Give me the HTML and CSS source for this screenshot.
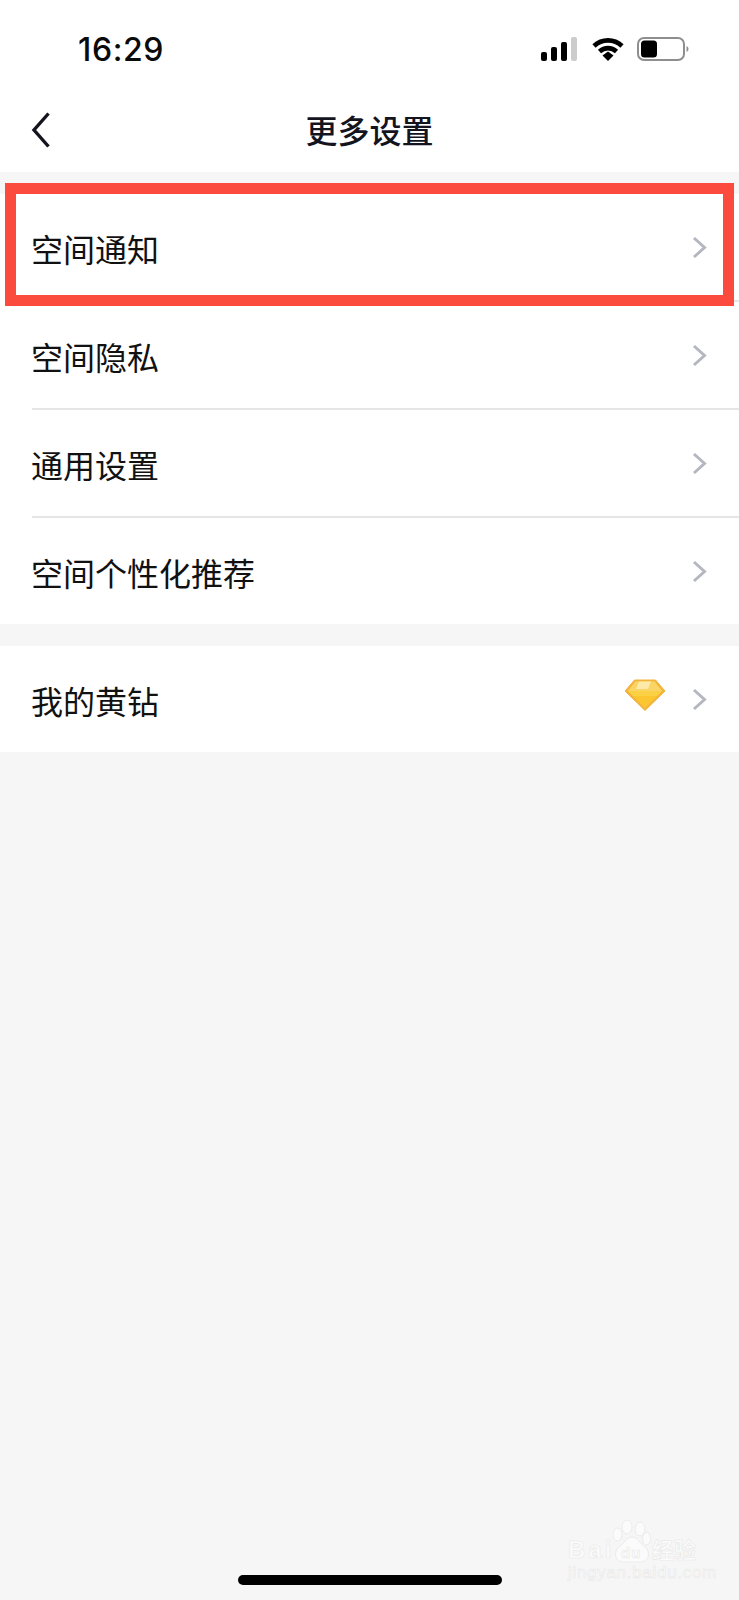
FILE: index.html
```html
<!DOCTYPE html>
<html lang="zh-CN">
<head>
<meta charset="utf-8">
<title>更多设置</title>
<link rel="stylesheet" href="styles.css">
</head>
<body>
<div class="screen">
  <header class="top">
    <div class="status">
      <span class="time">16:29</span>
      <div class="status-icons">
        <svg class="signal" width="36" height="24" viewBox="0 0 36 24"><rect x="0" y="15" width="6" height="9" rx="2" fill="#000"/><rect x="10" y="10" width="6" height="14" rx="2" fill="#000"/><rect x="20" y="5" width="6" height="19" rx="2" fill="#000"/><rect x="30" y="0" width="6" height="24" rx="2" fill="#ccc"/></svg>
        <svg class="wifi" width="32" height="24" viewBox="0 0 32 24"><path d="M2 9C10 1.500 22 1.500 30 9M7.500 14.500C12.500 10 19.500 10 24.500 14.500" fill="none" stroke="#000" stroke-width="4.600"/><path d="M10.500 18.500L16 14.500L21.500 18.500L16 24Z" fill="#000"/></svg>
        <svg class="battery" width="52" height="24" viewBox="0 0 52 24"><rect x="1" y="1" width="46" height="22" rx="6" fill="none" stroke="#8e8e8e" stroke-width="2"/><rect x="4" y="3.500" width="16" height="17" rx="3.500" fill="#000"/><path d="M49.500 9C51 9.800 51.500 10.800 51.500 12S51 14.200 49.500 15Z" fill="#8e8e8e"/></svg>
      </div>
    </div>
    <nav class="nav">
      <svg class="back" width="20" height="36" viewBox="0 0 20 36"><path d="M17.500 1.500L3 18L17.500 34.500" fill="none" stroke="#14141e" stroke-width="3.400"/></svg>
      <h1 class="title">更多设置</h1>
    </nav>
  </header>

  <section class="group">
    <div class="row"><span class="label">空间通知</span><svg class="chev" width="15" height="23" viewBox="0 0 15 23"><path d="M2 2L12.500 11.500L2 21" fill="none" stroke="#b5b7c0" stroke-width="3"/></svg></div>
    <div class="row"><span class="label">空间隐私</span><svg class="chev" width="15" height="23" viewBox="0 0 15 23"><path d="M2 2L12.500 11.500L2 21" fill="none" stroke="#b5b7c0" stroke-width="3"/></svg></div>
    <div class="row"><span class="label">通用设置</span><svg class="chev" width="15" height="23" viewBox="0 0 15 23"><path d="M2 2L12.500 11.500L2 21" fill="none" stroke="#b5b7c0" stroke-width="3"/></svg></div>
    <div class="row row-last"><span class="label">空间个性化推荐</span><svg class="chev" width="15" height="23" viewBox="0 0 15 23"><path d="M2 2L12.500 11.500L2 21" fill="none" stroke="#b5b7c0" stroke-width="3"/></svg></div>
  </section>

  <section class="group">
    <div class="row row-solo">
      <span class="label">我的黄钻</span>
      <svg class="gem" width="42" height="32" viewBox="0 0 42 32">
        <path d="M10.500 1H31.500L41 12L21 31.500L1 12Z" fill="#f2b43c" stroke="#f2b43c" stroke-linejoin="round"/>
        <path d="M11.500 2.500H30.500L38 12L21 29L4 12Z" fill="#fbc62f"/>
        <path d="M11.500 2.500H30.500L38 12H4Z" fill="#fad566"/>
        <path d="M15 2.500H27L24 10H12Z" fill="#fdeaa8"/>
        <path d="M4 12H38L33 17H9Z" fill="#fcd044"/>
      </svg>
      <svg class="chev" width="15" height="23" viewBox="0 0 15 23"><path d="M2 2L12.500 11.500L2 21" fill="none" stroke="#b5b7c0" stroke-width="3"/></svg>
    </div>
  </section>

  <div class="highlight"></div>

  <div class="watermark">
    <div class="wm-top">
      <span class="wm-bai">Bai</span>
      <svg class="wm-paw" width="38" height="43" viewBox="0 0 38 43">
        <g fill="#fbfbfb" stroke="#ebebeb" stroke-width="1">
          <ellipse cx="4.500" cy="14.500" rx="4.500" ry="6.500"/>
          <ellipse cx="14" cy="7" rx="5" ry="7"/>
          <ellipse cx="27" cy="9" rx="5" ry="7"/>
          <ellipse cx="33.500" cy="18.700" rx="4" ry="6.500"/>
          <path d="M19 17C25 17 27 24 32 27C38 32 36 42 28 42H10C2 42 0 32 6 27C11 24 13 17 19 17Z"/>
        </g>
      </svg>
      <span class="wm-du">du</span>
      <span class="wm-cn">经验</span>
    </div>
    <div class="wm-url">jingyan.baidu.com</div>
  </div>

  <div class="home-bar"></div>
</div>
</body>
</html>
```

FILE: styles.css
```css
* { box-sizing: border-box; }
html, body { margin: 0; padding: 0; }
body { font-family: "Noto Sans CJK SC", "Liberation Sans", sans-serif; }

.screen {
  position: relative;
  width: 739px;
  height: 1600px;
  overflow: hidden;
  background: #f6f6f6;
}

.top { height: 172px; background: #fff; }

.status {
  height: 88px;
  display: flex;
  justify-content: space-between;
  align-items: center;
  padding: 10px 50px 0 78px;
}
.time {
  padding-top: 2px;
  font-family: Inter, "Liberation Sans", sans-serif;
  font-size: 32px;
  font-weight: 500;
  line-height: 36px;
  letter-spacing: 0.6px;
  color: #0a0a0a;
}
.status-icons { display: flex; align-items: center; gap: 13px; }
.signal { margin-right: 2px; }

.nav {
  position: relative;
  height: 84px;
  display: flex;
  align-items: center;
  justify-content: center;
  padding: 0 0 2px 0;
}
.back { position: absolute; left: 31px; top: 24px; }
.title {
  margin: 0;
  font-size: 32px;
  font-weight: 500;
  line-height: 44px;
  color: #14141e;
}

.group { background: #fff; padding-left: 32px; margin-top: 22px; }

.row {
  height: 108px;
  display: flex;
  align-items: center;
  padding-right: 32px;
  border-bottom: 2px solid #e6e6e6;
}
.row-last { height: 106px; border-bottom: 0; }
.row-solo { height: 106px; border-bottom: 0; }

.label {
  flex: 1;
  margin-left: -1px;
  padding-top: 2px;
  font-size: 32px;
  font-weight: 400;
  line-height: 44px;
  color: #111;
}
.gem { margin: 0 26px 8px 0; filter: blur(0.5px); }

.highlight {
  position: absolute;
  left: 5px;
  top: 183px;
  width: 729px;
  height: 123px;
  border: 11px solid #fb4a3e;
}

.home-bar {
  position: absolute;
  left: 238px;
  top: 1575px;
  width: 264px;
  height: 10px;
  border-radius: 5px;
  background: #000;
}

.watermark {
  position: absolute;
  left: 568px;
  top: 1520px;
  width: 132px;
  color: #fbfbfb;
  font-family: "Liberation Sans", "Noto Sans CJK SC", sans-serif;
}
.wm-top { position: relative; height: 43px; display: flex; align-items: flex-end; }
.wm-bai, .wm-du, .wm-cn, .wm-url {
  -webkit-text-stroke: 0.6px #e9e9e9;
}
.wm-bai {
  width: 45px;
  margin-bottom: 1px;
  font-size: 24px;
  font-weight: 700;
  line-height: 24px;
  letter-spacing: 3px;
}
.wm-paw { flex: none; }
.wm-du {
  position: absolute;
  left: 53px;
  top: 25px;
  font-size: 15px;
  font-weight: 700;
  line-height: 15px;
  letter-spacing: 1px;
}
.wm-cn {
  margin-left: 1px;
  font-size: 22px;
  font-weight: 700;
  line-height: 24px;
  white-space: nowrap;
}
.wm-url {
  font-size: 17px;
  line-height: 20px;
  letter-spacing: 0.7px;
  white-space: nowrap;
}
```
